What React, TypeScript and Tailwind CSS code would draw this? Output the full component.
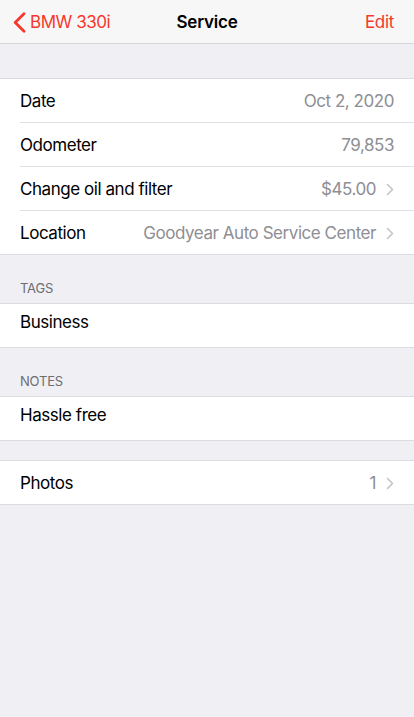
import React from "react";

const font = { fontFamily: "Inter, 'Liberation Sans', sans-serif" };

function Chevron() {
  return (
    <svg width="8" height="13" viewBox="0 0 8 13" className="ml-[10px] shrink-0">
      <polyline points="1.5,1.5 6.5,6.5 1.5,11.5" fill="none" stroke="#c4c4c9" strokeWidth="1.6" strokeLinecap="round" strokeLinejoin="round" />
    </svg>
  );
}

function Row({ label, value, chevron, last, raised }: { label: string; value?: string; chevron?: boolean; last?: boolean; raised?: boolean }) {
  return (
    <div className="pl-5 bg-white">
      <div
        className={`flex items-center pr-5 ${last ? "h-[43px]" : "h-[44px] border-b border-[#e0e0e4]"} ${raised ? "pb-[5px]" : "pt-[2px]"}`}
      >
        <span className="text-[17px] text-black tracking-[-0.45px]">{label}</span>
        <span className="ml-auto text-[17px] text-[#8e8e93] tracking-[-0.45px]">{value}</span>
        {chevron && <Chevron />}
      </div>
    </div>
  );
}

function Group({ children }: { children: React.ReactNode }) {
  return <div className="bg-white border-y border-[#dcdce0]">{children}</div>;
}

function Header({ title }: { title: string }) {
  return (
    <div className="h-[48px] flex items-end pl-5 pb-[5px] shrink-0">
      <span className="text-[13px] text-[#6d6d72] tracking-[-0.2px]">{title}</span>
    </div>
  );
}

export default function App() {
  return (
    <div className="w-[414px] h-[717px] bg-[#efeff4] flex flex-col" style={font}>
      <div className="h-[44px] bg-[#f7f7f7] border-b border-[#d6d6da] flex items-center relative shrink-0 pt-[2px]">
        <div className="flex items-center pl-[13px]">
          <svg width="13" height="21" viewBox="0 0 13 21">
            <polyline points="11,1.8 2.2,10.5 11,19.2" fill="none" stroke="#f6372c" strokeWidth="2.8" strokeLinecap="round" strokeLinejoin="round" />
          </svg>
          <span className="ml-[4px] text-[17px] text-[#f6372c] tracking-[-0.45px]">BMW 330i</span>
        </div>
        <span className="absolute left-0 right-0 text-center text-[17px] font-semibold text-black pointer-events-none tracking-[-0.2px]">Service</span>
        <span className="ml-auto pr-5 text-[17px] text-[#f6372c] tracking-[-0.3px]">Edit</span>
      </div>
      <div className="h-[34px] shrink-0" />
      <Group>
        <Row label="Date" value="Oct 2, 2020" />
        <Row label="Odometer" value="79,853" />
        <Row label="Change oil and filter" value="$45.00" chevron />
        <Row label="Location" value="Goodyear Auto Service Center" chevron last />
      </Group>
      <Header title="TAGS" />
      <Group>
        <Row label="Business" last raised />
      </Group>
      <Header title="NOTES" />
      <Group>
        <Row label="Hassle free" last raised />
      </Group>
      <div className="h-[19px] shrink-0" />
      <Group>
        <Row label="Photos" value="1" chevron last />
      </Group>
    </div>
  );
}
